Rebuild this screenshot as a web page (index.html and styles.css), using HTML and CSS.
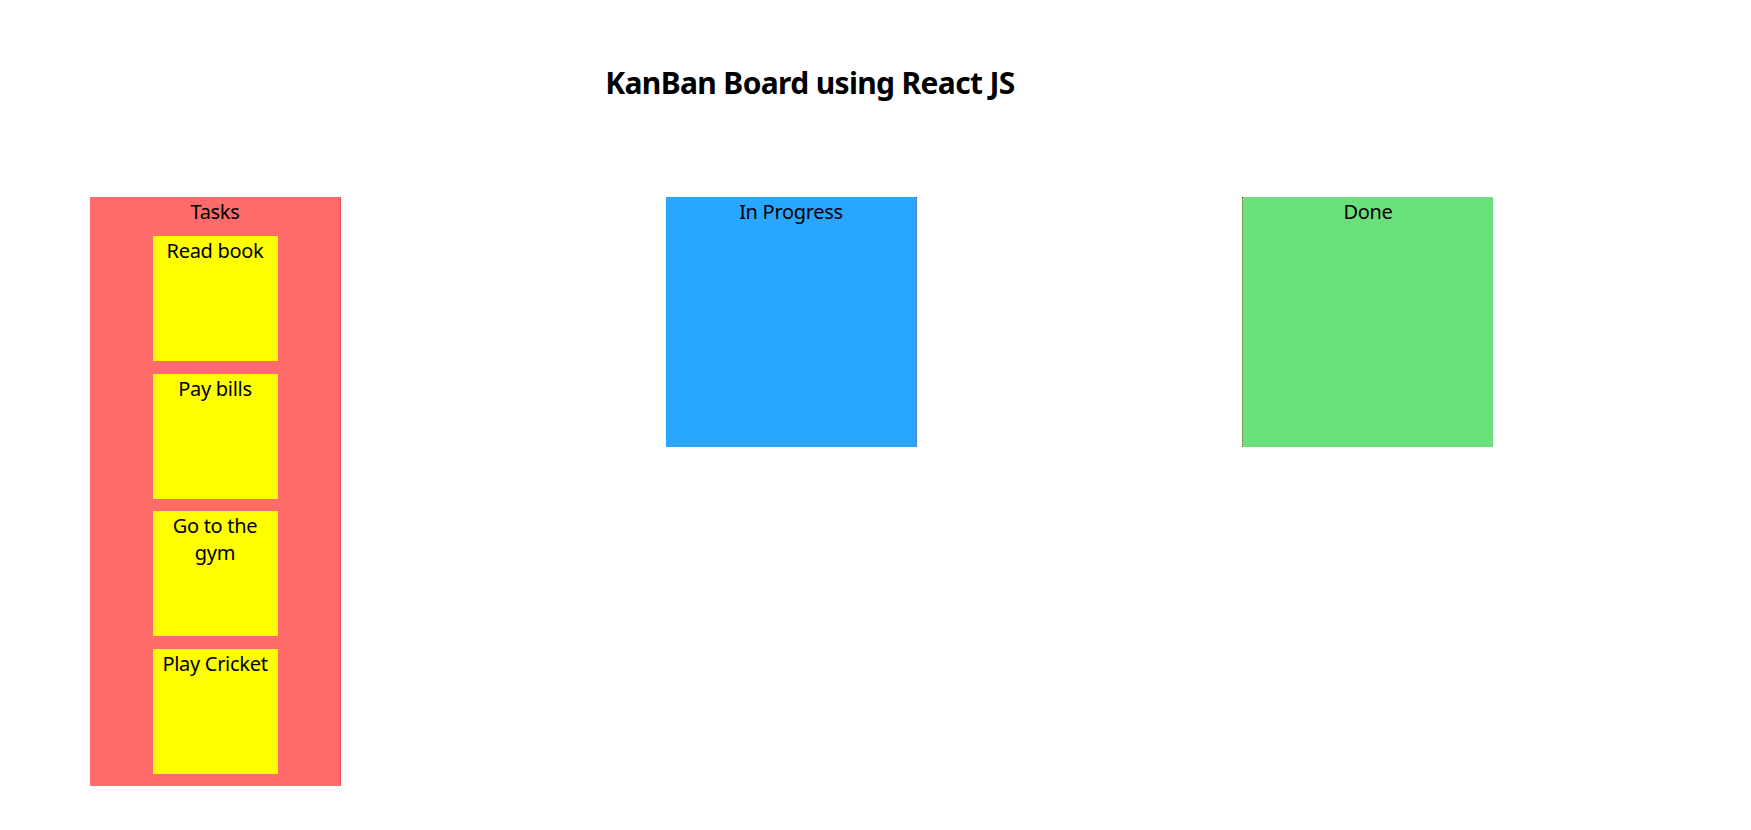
FILE: index.html
```html
<!DOCTYPE html>
<html>
  <head>
    <meta charset="utf-8">
    <title>KanBan Board</title>
    <link rel="stylesheet" href="styles.css">
  </head>
  <body>
    <div class="app">
      <h2 class="title">KanBan Board using React JS</h2>

      <div class="board">
        <div class="column tasks">
          <div class="column-title">Tasks</div>
          <div class="card">Read book</div>
          <div class="card">Pay bills</div>
          <div class="card">Go to the gym</div>
          <div class="card">Play Cricket</div>
        </div>

        <div class="column progress">
          <div class="column-title">In Progress</div>
        </div>

        <div class="column done">
          <div class="column-title">Done</div>
        </div>
      </div>
    </div>
  </body>
</html>
```

FILE: styles.css
```css
body {
  margin: 0;
  font-family: "Noto Sans", "Open Sans", sans-serif;
  font-size: 20px;
  line-height: 1.33;
  color: #000;
  background: #fff;
}

.title {
  width: 1620px;
  margin: 0;
  padding-top: 63px;
  font-size: 30px;
  line-height: 40px;
  font-weight: bold;
  letter-spacing: -0.65px;
  text-align: center;
}

.board {
  display: flex;
  align-items: flex-start;
  gap: 325px;
  margin-top: 94px;
  padding-left: 90px;
}

.column {
  width: 250px;
  min-height: 237.5px;
  padding-bottom: 12.5px;
  text-align: center;
  letter-spacing: -0.3px;
}

.column-title {
  height: 24.6px;
  padding-top: 2px;
}

.tasks {
  background: #ff6b6b;
  border-right: 1px dotted #d8323a;
}

.progress {
  background: #29a6ff;
  border-right: 1px dotted #6a5aa8;
}

.done {
  background: #69e07a;
  border-left: 1px dotted #8a6a2c;
}

.card {
  box-sizing: border-box;
  width: 125px;
  height: 125px;
  margin: 12.5px auto 0;
  padding-top: 2px;
  background: #ffff00;
}
```
